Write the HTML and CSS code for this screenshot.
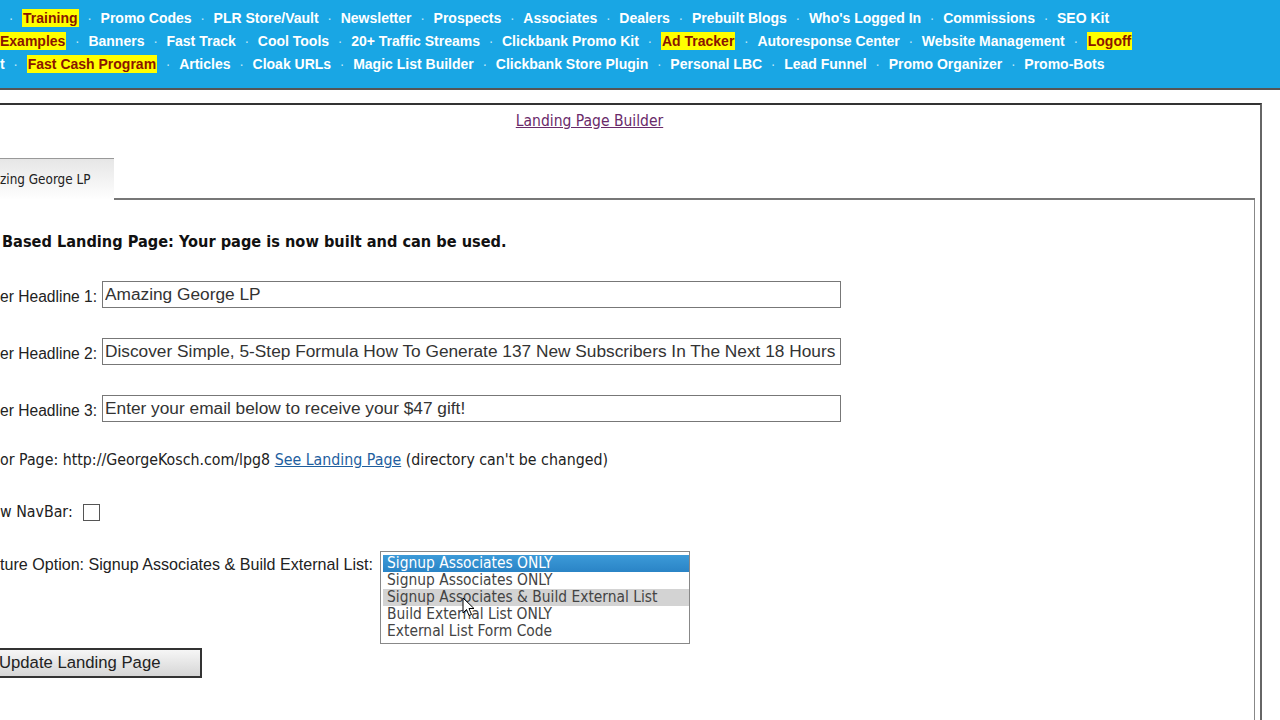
FILE: index.html
```html
<!DOCTYPE html>
<html lang="en">
<head>
  <meta charset="UTF-8">
  <meta name="viewport" content="width=device-width, initial-scale=1.0">
  <title>Landing Page Builder</title>
  <link rel="stylesheet" href="styles.css">
</head>
<body>
  <nav class="topnav">
    <div class="navrow">
      <span class="sep">·</span><a class="hot" href="#">Training</a><span class="sep">·</span><a href="#">Promo Codes</a><span class="sep">·</span><a href="#">PLR Store/Vault</a><span class="sep">·</span><a href="#">Newsletter</a><span class="sep">·</span><a href="#">Prospects</a><span class="sep">·</span><a href="#">Associates</a><span class="sep">·</span><a href="#">Dealers</a><span class="sep">·</span><a href="#">Prebuilt Blogs</a><span class="sep">·</span><a href="#">Who's Logged In</a><span class="sep">·</span><a href="#">Commissions</a><span class="sep">·</span><a href="#">SEO Kit</a>
    </div>
    <div class="navrow row2">
      <a class="hot" href="#">Examples</a><span class="sep">·</span><a href="#">Banners</a><span class="sep">·</span><a href="#">Fast Track</a><span class="sep">·</span><a href="#">Cool Tools</a><span class="sep">·</span><a href="#">20+ Traffic Streams</a><span class="sep">·</span><a href="#">Clickbank Promo Kit</a><span class="sep">·</span><a class="hot" href="#">Ad Tracker</a><span class="sep">·</span><a href="#">Autoresponse Center</a><span class="sep">·</span><a href="#">Website Management</a><span class="sep">·</span><a class="hot" href="#">Logoff</a>
    </div>
    <div class="navrow">
      <a href="#">t</a><span class="sep">·</span><a class="hot" href="#">Fast Cash Program</a><span class="sep">·</span><a href="#">Articles</a><span class="sep">·</span><a href="#">Cloak URLs</a><span class="sep">·</span><a href="#">Magic List Builder</a><span class="sep">·</span><a href="#">Clickbank Store Plugin</a><span class="sep">·</span><a href="#">Personal LBC</a><span class="sep">·</span><a href="#">Lead Funnel</a><span class="sep">·</span><a href="#">Promo Organizer</a><span class="sep">·</span><a href="#">Promo-Bots</a>
    </div>
  </nav>

  <div class="frame">
    <div class="title"><a href="#">Landing Page Builder</a></div>

    <div class="tabs">
      <div class="tab">zing George LP</div>
      <div class="tabline"></div>
    </div>

    <div class="panel">
      <p class="status">Based Landing Page: Your page is now built and can be used.</p>

      <div class="fields">
        <label>er Headline 1:</label>
        <input type="text" value="Amazing George LP">
        <label>er Headline 2:</label>
        <input type="text" value="Discover Simple, 5-Step Formula How To Generate 137 New Subscribers In The Next 18 Hours">
        <label>er Headline 3:</label>
        <input type="text" value="Enter your email below to receive your $47 gift!">
      </div>

      <p class="url">or Page: http://GeorgeKosch.com/lpg8 <a href="#">See Landing Page</a> (directory can't be changed)</p>

      <div class="navbar-opt">
        <span>w NavBar:</span>
        <span class="checkbox"></span>
      </div>

      <div class="feature">
        <span class="feature-label">ture Option: Signup Associates &amp; Build External List:</span>
        <div class="listbox">
          <div class="opt selected">Signup Associates ONLY</div>
          <div class="opt">Signup Associates ONLY</div>
          <div class="opt hover">Signup Associates &amp; Build External List</div>
          <div class="opt">Build External List ONLY</div>
          <div class="opt">External List Form Code</div>
          <svg class="cursor" width="13" height="21" viewBox="0 0 13 21">
            <path d="M1 1 L1 16 L4.5 12.5 L7 18.5 L9.5 17.5 L7 11.5 L12 11.5 Z" fill="#fff" stroke="#000" stroke-width="1"/>
          </svg>
        </div>
      </div>

      <button class="update">Update Landing Page</button>
    </div>
  </div>
</body>
</html>
```

FILE: styles.css
```css
html, body {
  margin: 0;
  padding: 0;
  overflow: hidden;
  background: #fff;
}

body {
  font-family: "Liberation Sans", Arial, sans-serif;
  color: #222;
}

.topnav {
  background-color: #19a6e4;
  padding: 7px 0 12px 0;
  border-bottom: 2px solid #555;
}

.navrow {
  font-size: 14px;
  font-weight: bold;
  line-height: 23px;
  white-space: nowrap;
}

.row2 {
  margin-left: -1px;
}

.navrow a {
  color: #fff;
  text-decoration: none;
}

.navrow a.hot {
  background-color: #ffff00;
  color: #8a1500;
  padding: 1px 1px;
}

.sep {
  color: #bfe4f5;
  font-weight: normal;
  padding: 0 8.7px;
}

.frame {
  margin: 13px 18px 0 0;
  border-top: 2px solid #333;
  border-right: 2px solid #666;
}

.title {
  text-align: center;
  padding: 6px 81px 0 0;
  font-family: "DejaVu Sans Condensed", "DejaVu Sans", sans-serif;
  font-size: 15.5px;
  line-height: 20px;
}

.title a {
  color: #6a2a6a;
}

.tabs {
  display: flex;
  align-items: flex-end;
  margin: 27px 5px 0 0;
}

.tab {
  width: 114px;
  height: 29px;
  padding-top: 12px;
  border-top: 1px solid #999;
  background: linear-gradient(#e6e6e6, #ffffff);
  font-family: "DejaVu Sans Condensed", "DejaVu Sans", sans-serif;
  font-size: 13.4px;
  line-height: 18px;
  color: #222;
}

.tabline {
  flex: 1;
  border-bottom: 2px solid #777;
}

.panel {
  display: flow-root;
  margin-right: 5px;
  border-right: 1px solid #888;
  min-height: 560px;
}

.status {
  margin: 32px 0 0 2px;
  font-family: "DejaVu Sans Condensed", "DejaVu Sans", sans-serif;
  font-weight: bold;
  font-size: 16.2px;
  line-height: 20px;
  color: #111;
}

.fields {
  display: grid;
  grid-template-columns: 102px 739px;
  row-gap: 30px;
  align-items: center;
  margin-top: 29px;
}

.fields label {
  font-size: 15.6px;
  line-height: 20px;
  padding-top: 4px;
  white-space: nowrap;
}

.fields input {
  height: 27px;
  box-sizing: border-box;
  border: 1px solid #777;
  padding: 0 2px;
  margin: 0;
  font-family: "Liberation Sans", Arial, sans-serif;
  font-size: 17.3px;
  color: #333;
  background: #fff;
}

.url {
  margin: 28px 0 0 0;
  font-family: "DejaVu Sans Condensed", "DejaVu Sans", sans-serif;
  font-size: 15.8px;
  line-height: 20px;
  color: #222;
}

.url a {
  color: #1f5f9f;
}

.navbar-opt {
  display: flex;
  align-items: center;
  gap: 10px;
  margin-top: 32px;
  font-family: "DejaVu Sans Condensed", "DejaVu Sans", sans-serif;
  font-size: 15.8px;
  line-height: 20px;
}

.checkbox {
  width: 15px;
  height: 15px;
  border: 1px solid #555;
  background: #fff;
}

.feature {
  display: flex;
  align-items: flex-start;
  gap: 7px;
  margin-top: 29px;
}

.feature-label {
  font-size: 16.1px;
  line-height: 20px;
  margin-top: 3px;
  white-space: nowrap;
}

.listbox {
  position: relative;
  width: 306px;
  border: 1px solid #888;
  padding: 3px 0 3px 2px;
  background: #fff;
}

.opt {
  height: 17px;
  line-height: 17px;
  padding-left: 4px;
  font-family: "DejaVu Sans Condensed", "DejaVu Sans", sans-serif;
  font-size: 15.4px;
  color: #444;
  white-space: nowrap;
}

.opt.selected {
  background: linear-gradient(#3c9ad8, #2a84c6);
  color: #fff;
}

.opt.hover {
  background: #d3d3d3;
}

.cursor {
  position: absolute;
  left: 81px;
  top: 45px;
}

.update {
  display: block;
  margin: 4px 0 0 -8px;
  width: 210px;
  height: 30px;
  padding: 0 0 0 5px;
  text-align: left;
  border: 2px solid #333;
  background: linear-gradient(#f6f6f6, #d6d6d6);
  font-family: "Liberation Sans", Arial, sans-serif;
  font-size: 16.7px;
  color: #222;
}
```
